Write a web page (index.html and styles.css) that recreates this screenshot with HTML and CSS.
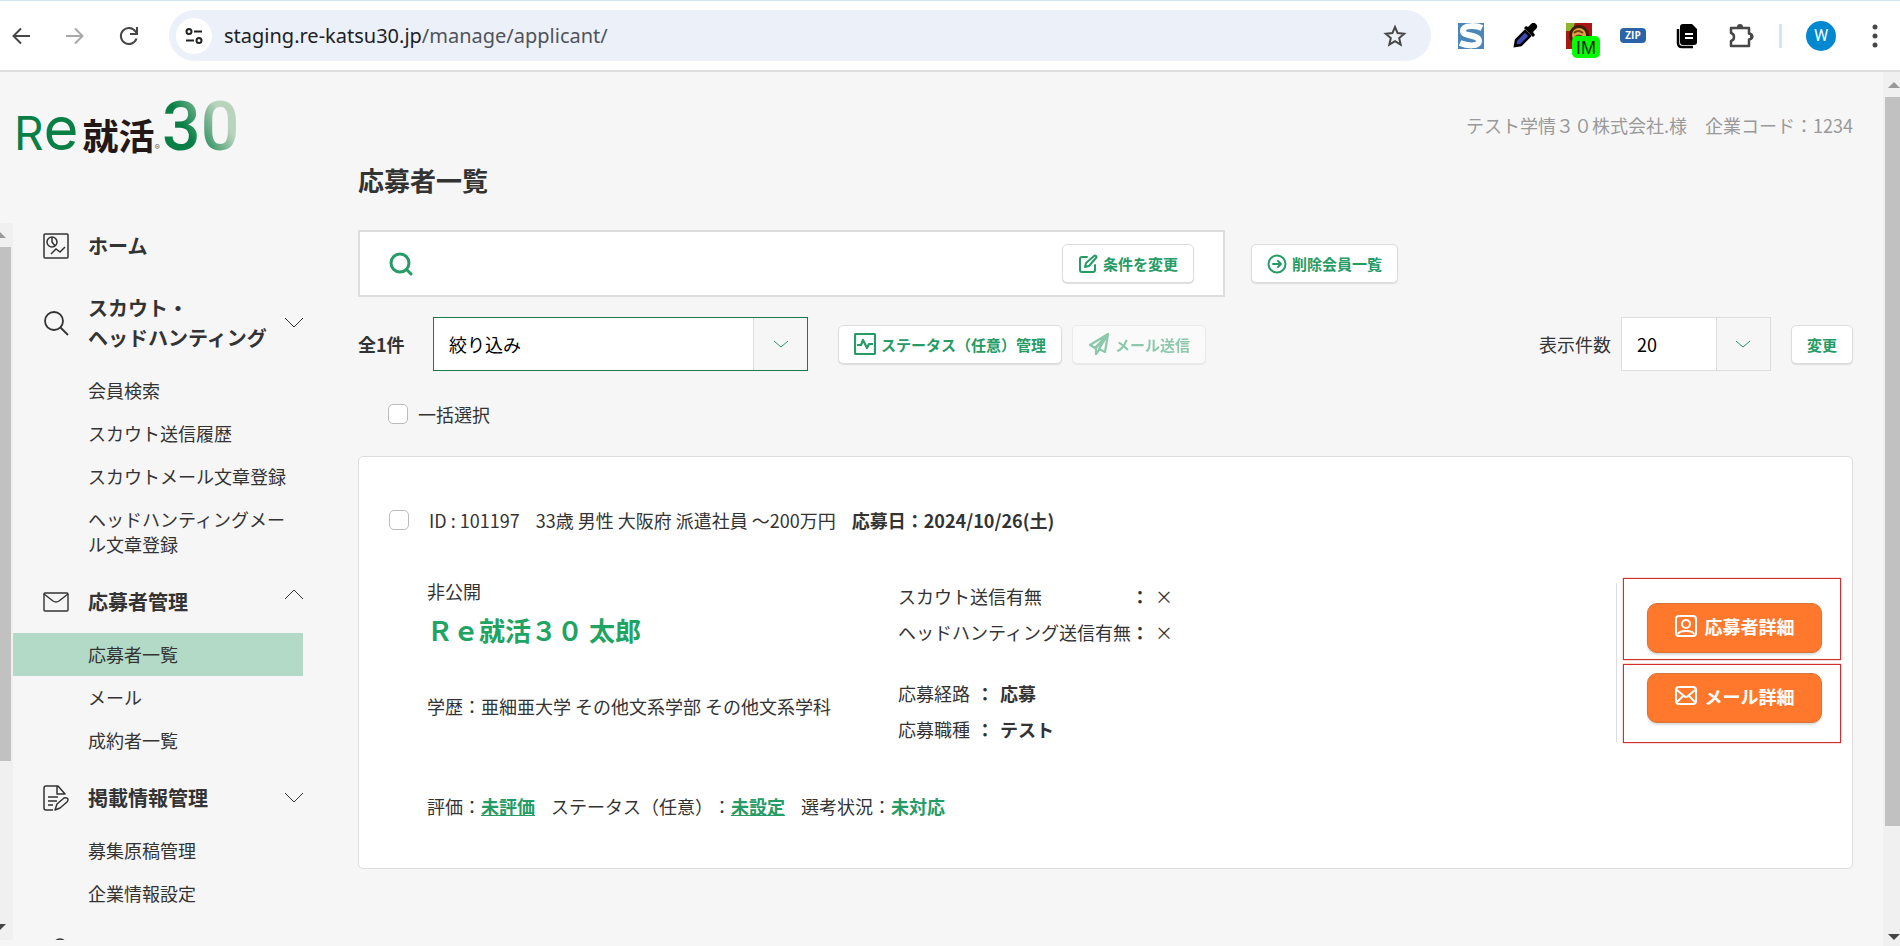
FILE: index.html
```html
<!DOCTYPE html>
<html lang="ja">
<head>
  <meta charset="UTF-8" />
  <meta name="viewport" content="width=device-width, initial-scale=1.0" />
  <title>応募者一覧</title>
  <link rel="stylesheet" href="styles.css">
</head>
<body>

<!-- browser bar -->
<div class="toolbar">
  <div class="nav-buttons">
    <button type="button" aria-label="戻る"><svg width="20" height="20" viewBox="0 0 20 20" fill="none" stroke="#474747" stroke-width="2"><path d="M19 10H3M10 2.500L2.500 10l7.500 7.500"/></svg></button>
    <button type="button" aria-label="進む"><svg width="20" height="20" viewBox="0 0 20 20" fill="none" stroke="#a8a8a8" stroke-width="2"><path d="M1 10h16M10 2.500l7.500 7.500-7.500 7.500"/></svg></button>
    <button type="button" aria-label="再読み込み"><svg width="20" height="20" viewBox="0 0 20 20" fill="none" stroke="#474747" stroke-width="2"><path d="M17.500 12.500A8 8 0 1 1 16.500 5.500L18 7.500M18 1v7h-7"/></svg></button>
  </div>
  <div class="address">
    <span class="site-info"><svg width="20" height="20" viewBox="0 0 20 20" fill="none" stroke="#222" stroke-width="2"><circle cx="5" cy="5.500" r="2.500"/><path d="M10 5.500h8M2 14.500h8"/><circle cx="15" cy="14.500" r="2.500"/></svg></span>
    <span class="url">staging.re-katsu30.jp<span class="url-path">/manage/applicant/</span></span>
    <button type="button" class="star" aria-label="ブックマーク"><svg width="24" height="24" viewBox="0 0 24 24" fill="none" stroke="#474747" stroke-width="2"><path d="M12 3l2.600 6.100 6.600.600-5 4.400 1.500 6.500L12 17.200l-5.700 3.400 1.500-6.500-5-4.400 6.600-.600z"/></svg></button>
  </div>
  <div class="extensions">
    <svg width="26" height="26" viewBox="0 0 26 26"><path fill="#4a86b8" d="M0 0h26v26H0z"/><path d="M24 5C20 3 5 1 5 8c0 6 16 3 16 10 0 6-12 5-19 2" fill="none" stroke="#fff" stroke-width="6"/></svg>
    <svg width="26" height="26" viewBox="0 0 26 26"><path d="M3 23l1-6 9-9 5 5-9 9z" fill="#3d49b5" stroke="#000" stroke-width="2.500"/><path d="M12 5l9 9 2-2-2-3 3-3a3.500 3.500 0 0 0-5-5l-3 3-2-1z"/></svg>
    <span class="im">
      <svg width="26" height="26" viewBox="0 0 26 26"><path fill="#a81616" d="M0 0h26v26H0z"/><path fill="#8fb52a" d="M0 0h9l-3 8H0z"/><circle cx="13" cy="12" r="10" fill="#401c0a"/><circle cx="13" cy="12" r="7" fill="#e0a348"/><path d="M8 10q4-4 9 0M9 14q4-3 8 0" fill="none" stroke="#7a3c10" stroke-width="2"/></svg>
      <b class="im-badge">IM</b>
    </span>
    <b class="zip">ZIP</b>
    <svg width="26" height="26" viewBox="0 0 26 26"><path d="M4 6v14q0 4 4 4h11" fill="none" stroke="#000" stroke-width="2.500"/><path d="M9 1h9l5 5v13q0 3-3 3H9q-3 0-3-3V4q0-3 3-3z"/><path d="M11 11h8M11 15h8" stroke="#fff" stroke-width="2"/></svg>
    <svg width="26" height="26" viewBox="0 0 26 26"><path d="M3 5h18v5.500a3 3 0 0 1 0 6V23H3v-5c4-1 4-7 0-8z" fill="none" stroke="#474747" stroke-width="2.500" stroke-linejoin="round"/><path d="M9 4a3 3 0 0 1 6 0zM22 10a3 3 0 0 1 0 7z" fill="#474747"/></svg>
  </div>
  <span class="bar"></span>
  <span class="avatar">W</span>
  <svg width="6" height="24" viewBox="0 0 6 24" fill="#474747"><circle cx="3" cy="3" r="2.500"/><circle cx="3" cy="12" r="2.500"/><circle cx="3" cy="21" r="2.500"/></svg>
</div>

<div class="page">
  <aside class="sidebar">
    <a href="#" class="logo">
      <span class="logo-r">R</span><span class="logo-e">e</span><span class="logo-kanji">就活</span><span class="logo-mark">®</span><span class="logo-num">30</span>
    </a>

    <div class="side-scroll">
      <div class="scrollbar scrollbar-left">
        <svg class="arrow" width="12" height="6" viewBox="0 0 12 6" fill="#999"><path d="M0 6l6-6 6 6z"/></svg>
        <div class="track"><div class="thumb"></div></div>
        <svg class="arrow" width="12" height="6" viewBox="0 0 12 6" fill="#444"><path d="M0 0h12L6 6z"/></svg>
      </div>

      <nav class="menu">
        <a href="#" class="menu-head menu-home">
          <svg width="26" height="26" viewBox="0 0 26 26" fill="none" stroke="#333" stroke-width="1.500"><rect x="1" y="1" width="24" height="24" rx="1"/><circle cx="9" cy="9" r="5"/><path d="M9 4v5l3 4M8 21l5-5 4 3 5-5"/></svg>
          <span>ホーム</span>
        </a>

        <a href="#" class="menu-head">
          <svg width="26" height="26" viewBox="0 0 26 26" fill="none" stroke="#333" stroke-width="1.800"><circle cx="11" cy="11" r="9"/><path d="M17.500 17.500L25 25"/></svg>
          <span>スカウト・<br>ヘッドハンティング</span>
          <svg class="chevron" width="18" height="10" viewBox="0 0 18 10" fill="none" stroke="#333"><path d="M0 0l9 9 9-9"/></svg>
        </a>
        <ul>
          <li><a href="#">会員検索</a></li>
          <li><a href="#">スカウト送信履歴</a></li>
          <li><a href="#">スカウトメール文章登録</a></li>
          <li><a href="#">ヘッドハンティングメー<br>ル文章登録</a></li>
        </ul>

        <a href="#" class="menu-head">
          <svg width="26" height="26" viewBox="0 0 26 26" fill="none" stroke="#333" stroke-width="1.400"><rect x="1" y="4" width="24" height="18" rx="1"/><path d="M1 5l9 7q3 2 6 0l9-7"/></svg>
          <span>応募者管理</span>
          <svg class="chevron chevron-up" width="18" height="10" viewBox="0 0 18 10" fill="none" stroke="#333"><path d="M0 10l9-9 9 9"/></svg>
        </a>
        <ul>
          <li><a href="#" class="active">応募者一覧</a></li>
          <li><a href="#">メール</a></li>
          <li><a href="#">成約者一覧</a></li>
        </ul>

        <a href="#" class="menu-head">
          <svg width="26" height="26" viewBox="0 0 26 26" fill="none" stroke="#333" stroke-width="1.500" stroke-linejoin="round"><path d="M10 25H3q-2 0-2-2V3q0-2 2-2h12l7 8h-8V1M5 12h10M5 16h9M5 20h5"/><path d="M12 25l2-6 7-6q3-1 4 1 0 2-1 3l-7 6z"/></svg>
          <span>掲載情報管理</span>
          <svg class="chevron" width="18" height="10" viewBox="0 0 18 10" fill="none" stroke="#333"><path d="M0 0l9 9 9-9"/></svg>
        </a>
        <ul>
          <li><a href="#">募集原稿管理</a></li>
          <li><a href="#">企業情報設定</a></li>
        </ul>

        <a href="#" class="menu-head" aria-label="アカウント">
          <svg width="26" height="26" viewBox="0 0 26 26" fill="none" stroke="#333" stroke-width="1.500"><circle cx="17" cy="9" r="6"/><path d="M4 25q0-8 13-8 8 0 8 8"/></svg>
        </a>
      </nav>
    </div>
  </aside>

  <main>
    <p class="company">テスト学情３０株式会社.様　企業コード：1234</p>
    <h1>応募者一覧</h1>

    <div class="search-row">
      <div class="search-box">
        <svg width="24" height="24" viewBox="0 0 24 24" fill="none" stroke="#259b65" stroke-width="3" stroke-linecap="round"><circle cx="11" cy="11" r="9"/><path d="M18 18l4 4"/></svg>
        <input type="text" aria-label="検索条件">
        <button type="button" class="btn">
          <svg width="20" height="20" viewBox="0 0 20 20" fill="none" stroke="#259b65" stroke-width="2" stroke-linecap="round" stroke-linejoin="round"><path d="M9 3H4Q2 3 2 5v11q0 2 2 2h11q2 0 2-2v-5"/><path d="M7 13l1-4 8-7q1-1 2 0t0 2l-7 8z"/></svg>
          条件を変更
        </button>
      </div>
      <button type="button" class="btn">
        <svg width="20" height="20" viewBox="0 0 20 20" fill="none" stroke="#259b65" stroke-width="2" stroke-linecap="round" stroke-linejoin="round"><circle cx="10" cy="10" r="8.500"/><path d="M6 10h8M11 7l3 3-3 3"/></svg>
        削除会員一覧
      </button>
    </div>

    <div class="filter-row">
      <span class="total">全1件</span>
      <div class="select select-filter">
        <select aria-label="絞り込み"><option>絞り込み</option></select>
        <span class="select-arrow"><svg width="16" height="8" viewBox="0 0 16 8" fill="none" stroke="#259b65"><path d="M1 1l7 6 7-6"/></svg></span>
      </div>
      <button type="button" class="btn btn-status">
        <svg width="22" height="22" viewBox="0 0 22 22" fill="none" stroke="#259b65" stroke-width="2.200" stroke-linejoin="round"><rect x="1" y="1" width="20" height="20" rx="1"/><path d="M3 12h4l2-5 4 8 2-4h4"/></svg>
        ステータス（任意）管理
      </button>
      <button type="button" class="btn btn-mail" disabled>
        <svg width="22" height="22" viewBox="0 0 22 22" fill="none" stroke="#259b65" stroke-width="2.200" stroke-linejoin="round"><path d="M20 1L2 12l5 3zM20 1l-3 18-6-3zM20 1L8 15v6l3-4"/></svg>
        メール送信
      </button>
      <label class="per-page" for="perPage">表示件数</label>
      <div class="select select-count">
        <select id="perPage"><option>20</option></select>
        <span class="select-arrow"><svg width="16" height="8" viewBox="0 0 16 8" fill="none" stroke="#259b65"><path d="M1 1l7 6 7-6"/></svg></span>
      </div>
      <button type="button" class="btn btn-change">変更</button>
    </div>

    <label class="check-all"><input type="checkbox"> 一括選択</label>

    <section class="card">
      <div class="card-head">
        <input type="checkbox" id="applicant">
        <label for="applicant">ID : 101197</label>
        <span>33歳 男性 大阪府 派遣社員 ～200万円</span>
        <b>応募日：2024/10/26(土)</b>
      </div>

      <div class="card-body">
        <div class="profile">
          <p>非公開</p>
          <h2>Ｒｅ就活３０ 太郎</h2>
          <p>学歴：亜細亜大学 その他文系学部 その他文系学科</p>
        </div>

        <div class="details">
          <table class="sent">
            <tr><th>スカウト送信有無</th><td>：</td><td>×</td></tr>
            <tr><th>ヘッドハンティング送信有無</th><td>：</td><td>×</td></tr>
          </table>
          <table class="entry">
            <tr><th>応募経路</th><td>：</td><td><b>応募</b></td></tr>
            <tr><th>応募職種</th><td>：</td><td><b>テスト</b></td></tr>
          </table>
        </div>

        <div class="divider"></div>
        <div class="actions">
          <div class="frame">
            <button type="button" class="btn-orange">
              <svg width="22" height="22" viewBox="0 0 22 22" fill="none" stroke="#fff" stroke-width="2"><rect x="1" y="1" width="20" height="20" rx="3"/><circle cx="11" cy="9" r="4"/><path d="M3 19q1-3 8-3t8 3"/></svg>
              応募者詳細
            </button>
          </div>
          <div class="frame">
            <button type="button" class="btn-orange">
              <svg width="22" height="22" viewBox="0 0 22 22" fill="none" stroke="#fff" stroke-width="2"><rect x="1" y="2" width="20" height="17" rx="3"/><path d="M2 5l7 6q2 2 4 0l7-6M2 17l6-6M20 17l-6-6"/></svg>
              メール詳細
            </button>
          </div>
        </div>
      </div>

      <div class="card-foot">
        <span>評価：<a href="#">未評価</a></span>
        <span>ステータス（任意）：<a href="#">未設定</a></span>
        <span>選考状況：<b>未対応</b></span>
      </div>
    </section>
  </main>

  <div class="scrollbar scrollbar-right">
    <svg class="arrow" width="12" height="6" viewBox="0 0 12 6" fill="#999"><path d="M0 6l6-6 6 6z"/></svg>
    <div class="track"><div class="thumb"></div></div>
    <svg class="arrow" width="12" height="6" viewBox="0 0 12 6" fill="#444"><path d="M0 0h12L6 6z"/></svg>
  </div>
</div>

</body>
</html>
```
FILE: styles.css
```css
* {
  box-sizing: border-box;
}
body {
  margin: 0;
  height: 100vh;
  display: flex;
  flex-direction: column;
  overflow: hidden;
  background: #f6f6f6;
  color: #333;
  font-family: "Noto Sans CJK JP", sans-serif;
  font-size: 18px;
  line-height: 26px;
  text-spacing-trim: space-all;
}
h1, h2, p, ul {
  margin: 0;
  padding: 0;
}
ul {
  list-style: none;
}
a {
  color: inherit;
  text-decoration: none;
}
button, input, select {
  font-family: inherit;
}
button {
  cursor: pointer;
}
svg {
  display: block;
  flex: none;
}

/* browser bar */
.toolbar {
  flex: none;
  display: flex;
  align-items: center;
  height: 72px;
  padding-right: 22px;
  background: #fff;
  border-top: 1px solid #d6e2f5;
  border-bottom: 2px solid #dedede;
}
.nav-buttons {
  display: flex;
  gap: 34px;
  padding: 0 30px 0 11px;
}
.nav-buttons button, .star {
  padding: 0;
  border: 0;
  background: none;
}
.address {
  flex: 1;
  display: flex;
  align-items: center;
  height: 51px;
  padding: 0 24px 0 7px;
  border-radius: 26px;
  background: #ecf0f9;
}
.site-info {
  display: flex;
  align-items: center;
  justify-content: center;
  width: 36px;
  height: 36px;
  border-radius: 50%;
  background: #fff;
}
.url {
  flex: 1;
  padding-left: 12px;
  color: #202124;
  font-family: "Noto Sans", sans-serif;
  font-size: 20px;
}
.url-path {
  color: #50545a;
}
.extensions {
  display: flex;
  align-items: center;
  gap: 28px;
  padding: 0 25px 0 27px;
}
.im {
  position: relative;
}
.im-badge {
  position: absolute;
  left: 6px;
  top: 13px;
  width: 28px;
  height: 22px;
  border-radius: 5px;
  background: #0f0;
  color: #222;
  font: 18px/24px "Liberation Sans", sans-serif;
  text-align: center;
}
.zip {
  width: 26px;
  height: 15px;
  border-radius: 4px;
  background: #2b63a8;
  color: #fff;
  font: bold 10px/15px "Open Sans", sans-serif;
  text-align: center;
}
.bar {
  width: 3px;
  height: 24px;
  background: #d3e3fd;
}
.avatar {
  width: 30px;
  height: 30px;
  margin: 0 36px 0 24px;
  border-radius: 50%;
  background: #0288d1;
  color: #fff;
  font: 16px/30px Roboto, sans-serif;
  text-align: center;
}

.page {
  flex: 1;
  display: flex;
  min-height: 0;
}

/* scrollbars */
.scrollbar {
  display: flex;
  flex-direction: column;
  flex: none;
  background: #f0f0f0;
}
.track {
  flex: 1;
  margin: 9px 0;
}
.thumb {
  background: #c1c1c1;
}
.scrollbar-right {
  width: 17px;
  padding: 10px 0 6px;
}
.scrollbar-right .arrow {
  margin-left: 5px;
}
.scrollbar-right .thumb {
  height: 88%;
  margin-left: 2px;
}
.scrollbar-left {
  width: 13px;
  padding: 9px 0 10px;
}
.scrollbar-left .arrow {
  margin-left: -6px;
}
.scrollbar-left .thumb {
  height: 77%;
  margin-right: 2px;
}

/* sidebar */
.sidebar {
  flex: none;
  display: flex;
  flex-direction: column;
  width: 303px;
}
.logo {
  flex: none;
  display: flex;
  align-items: baseline;
  height: 151px;
  padding: 25px 0 0 14px;
  font-family: Inter, sans-serif;
  line-height: 60px;
  color: #087f45;
}
.logo-r {
  font-size: 46px;
}
.logo-e {
  font-size: 60px;
}
.logo-kanji {
  margin-left: 4px;
  color: #231815;
  font-family: "Noto Sans CJK JP", sans-serif;
  font-size: 36px;
  font-weight: bold;
}
.logo-mark {
  font-size: 8px;
  color: #666;
}
.logo-num {
  margin-left: 2px;
  font-family: Roboto, sans-serif;
  font-size: 68px;
  font-weight: 500;
  background: linear-gradient(60deg, #087f45 35%, #b9d3bd 75%);
  -webkit-background-clip: text;
  background-clip: text;
  color: transparent;
}
.side-scroll {
  flex: 1;
  display: flex;
  min-height: 0;
  margin-bottom: 6px;
}
.menu {
  flex: 1;
  overflow: hidden;
}
.menu-head {
  display: flex;
  align-items: center;
  gap: 19px;
  padding: 21px 0 16px 30px;
  font-size: 20px;
  font-weight: bold;
  line-height: 30px;
  white-space: nowrap;
}
.menu-head span {
  flex: 1;
  min-width: 0;
}
.menu-home {
  padding-top: 8px;
  padding-bottom: 11px;
}
.chevron {
  margin-left: -19px;
}
.chevron-up {
  margin-bottom: 16px;
}
.menu li a {
  display: block;
  padding: 9px 0 9px 75px;
  line-height: 25px;
}
.menu li a.active {
  background: #b3dac7;
}

/* main */
main {
  flex: 1;
  min-width: 0;
  padding: 40px 30px 0 55px;
}
.company {
  color: #999;
  text-align: right;
}
h1 {
  margin: 24px 0 32px;
  font-size: 26px;
  line-height: 36px;
}
.search-row {
  display: flex;
  align-items: center;
  gap: 26px;
}
.search-box {
  display: flex;
  align-items: center;
  width: 58%;
  height: 67px;
  padding: 0 29px;
  border: 2px solid #ddd;
  background: #fff;
}
.search-box input {
  flex: 1;
  min-width: 0;
  border: 0;
  outline: 0;
  font-size: 18px;
}
.btn {
  display: flex;
  align-items: center;
  gap: 5px;
  height: 39px;
  padding: 0 15px;
  border: 1px solid #ddd;
  border-radius: 5px;
  background: #fff;
  box-shadow: 0 1px 1px #ddd;
  color: #259b65;
  font-size: 15px;
  font-weight: bold;
  white-space: nowrap;
}
.filter-row {
  display: flex;
  align-items: center;
  height: 54px;
  margin-top: 20px;
}
.total {
  width: 75px;
  font-weight: bold;
}
.select {
  display: flex;
  height: 54px;
  border: 1px solid #ddd;
  background: #fff;
}
.select select {
  flex: 1;
  min-width: 0;
  padding: 0 15px;
  border: 0;
  outline: 0;
  appearance: none;
  background: #fff;
  color: #000;
  font-size: 18px;
}
.select-arrow {
  display: flex;
  align-items: center;
  justify-content: center;
  width: 54px;
  border-left: 1px solid #ddd;
  background: #f6f6f6;
}
.select-filter {
  width: 375px;
  border-color: #1a7a4b;
}
.select-count {
  width: 150px;
}
.btn-status {
  margin: 0 10px 0 30px;
}
.btn-mail {
  opacity: 0.5;
}
.per-page {
  margin: 0 10px 0 auto;
}
.btn-change {
  margin-left: 20px;
}
.check-all {
  display: flex;
  align-items: center;
  gap: 10px;
  margin: 30px 0 29px 30px;
}
input[type="checkbox"] {
  appearance: none;
  width: 20px;
  height: 20px;
  margin: 0;
  border: 1px solid #bbb;
  border-radius: 5px;
  background: #fff;
}

/* applicant card */
.card {
  padding: 50px 11px 49px 30px;
  border: 1px solid #ddd;
  border-radius: 5px;
  background: #fff;
}
.card-head {
  display: flex;
  align-items: center;
  gap: 16px;
}
.card-head input {
  margin-right: 4px;
}
.card-body {
  display: flex;
  margin: 45px 0 46px 38px;
}
.profile {
  width: 471px;
}
.profile h2 {
  margin: 8px 0 45px;
  color: #1fa463;
  font-size: 26px;
  line-height: 36px;
}
.details {
  flex: 1;
}
.details table {
  border-collapse: collapse;
  line-height: 36px;
}
.details th, .details td {
  padding: 0 6px 0 0;
  font-weight: normal;
  text-align: left;
}
.details .sent th {
  padding-right: 0;
}
.details td:nth-child(2) {
  font-weight: bold;
}
.entry {
  margin-top: 25px;
}
.divider {
  width: 1px;
  margin: 5px 6px 5px 0;
  background: #ddd;
}
.actions {
  display: flex;
  flex-direction: column;
  gap: 4px;
}
.frame {
  padding: 24px 18px 6px 23px;
  border: 1px solid #d32f2f;
  box-shadow: 0 0 1px #d32f2f;
}
.frame + .frame {
  padding: 8px 18px 19px 23px;
}
.btn-orange {
  display: flex;
  align-items: center;
  justify-content: center;
  gap: 8px;
  width: 175px;
  height: 50px;
  padding: 0 0 5px;
  border: 1px solid #d8753a;
  border-radius: 10px;
  background: #ff782c;
  box-shadow: 0 2px 2px #ddd;
  color: #fff;
  font-size: 18px;
  font-weight: bold;
}
.card-foot {
  display: flex;
  gap: 16px;
  margin-left: 38px;
}
.card-foot a, .card-foot b {
  color: #259b65;
  font-weight: bold;
}
.card-foot a {
  text-decoration: underline;
}
```
